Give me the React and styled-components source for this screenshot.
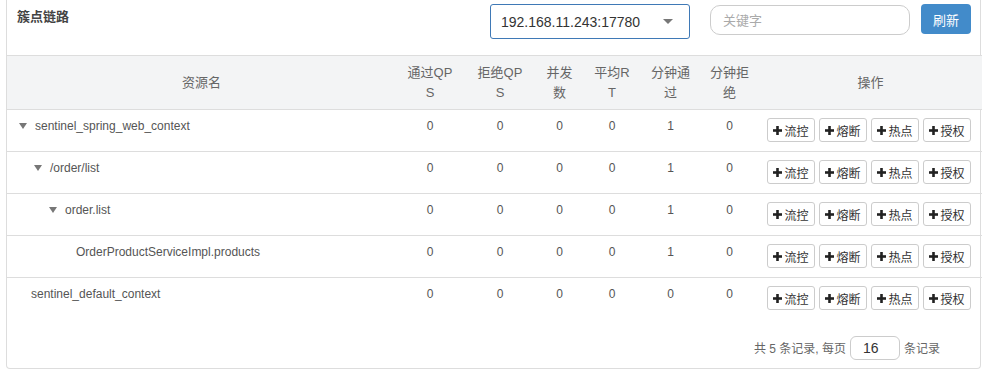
import styled, { createGlobalStyle } from "styled-components";

const GlobalStyle = createGlobalStyle`
  body {
    margin: 0;
    background: #fff;
    font-family: "Liberation Sans", Arial, "Noto Sans CJK SC", sans-serif;
    font-size: 13px;
    color: #555;
  }
`;

const Page = styled.div`
  padding: 0 6px 1px;
`;

const Panel = styled.section`
  border: 1px solid #ddd;
  border-top: 0;
  border-radius: 0 0 4px 4px;
  background: #fff;
`;

const Toolbar = styled.div`
  display: flex;
  align-items: flex-start;
  height: 55px;
  box-sizing: border-box;
  padding: 4px 9px 0 10px;
`;

const Title = styled.h3`
  flex: 1;
  margin: 4px 0 0;
  font-size: 13px;
  line-height: 18px;
  font-weight: bold;
  color: #444;
`;

const Select = styled.div`
  display: flex;
  align-items: center;
  justify-content: space-between;
  width: 200px;
  height: 35px;
  box-sizing: border-box;
  margin-right: 20px;
  padding: 0 16px 0 10px;
  border: 1px solid #3f79b6;
  border-radius: 3px;
  font-size: 14px;
  color: #333;
`;

const Caret = styled.span`
  width: 0;
  height: 0;
  border-left: 5px solid transparent;
  border-right: 5px solid transparent;
  border-top: 5px solid #777;
`;

const Search = styled.input`
  width: 200px;
  height: 30px;
  box-sizing: border-box;
  margin: 1px 11px 0 0;
  padding: 0 12px;
  border: 1px solid #ccc;
  border-radius: 10px;
  font-family: inherit;
  font-size: 13px;
  outline: none;

  &::placeholder {
    color: #aaa;
  }
`;

const PrimaryButton = styled.button`
  width: 50px;
  height: 30px;
  border: 0;
  border-radius: 4px;
  background: #428bca;
  color: #fff;
  font-family: inherit;
  font-size: 13px;
`;

const Table = styled.table`
  width: 100%;
  table-layout: fixed;
  border-collapse: collapse;
`;

const HeadCell = styled.th`
  width: ${(props) => props.$w}px;
  height: 54px;
  box-sizing: border-box;
  padding: 0 10px;
  background: #f3f4f5;
  border-top: 1px solid #ddd;
  border-bottom: 1px solid #ddd;
  font-weight: normal;
  color: #666;
  line-height: 20px;
  text-align: center;
  vertical-align: middle;
  word-break: break-all;
`;

const Row = styled.tr`
  & + & td {
    border-top: 1px solid #ddd;
  }
`;

const Cell = styled.td`
  height: 42px;
  box-sizing: border-box;
  padding: 7px 8px 0;
  font-size: 12px;
  line-height: 18px;
  vertical-align: top;
  text-align: ${(props) => (props.$center ? "center" : "left")};
  color: #555;
`;

const NameCell = styled(Cell)`
  padding-left: ${(props) => props.$indent}px;
  white-space: nowrap;
`;

const Toggle = styled.svg`
  display: inline-block;
  width: 8px;
  height: 6px;
  margin-right: 8px;
  vertical-align: 1px;
`;

const OpsCell = styled(Cell)`
  padding-top: 8px;
`;

const Ops = styled.div`
  display: flex;
  gap: 4px;
`;

const OpButton = styled.button`
  display: flex;
  align-items: center;
  justify-content: center;
  gap: 2px;
  width: 48px;
  height: 24px;
  padding: 0;
  border: 1px solid #ccc;
  border-radius: 3px;
  background: #fff;
  color: #333;
  font-family: inherit;
  font-size: 12px;
`;

const Pager = styled.div`
  display: flex;
  align-items: center;
  justify-content: flex-end;
  gap: 4px;
  padding: 16px 40px 8px 0;
  font-size: 12px;
  color: #666;
`;

const PageSize = styled.input`
  width: 50px;
  height: 24px;
  box-sizing: border-box;
  padding: 0 0 0 12px;
  border: 1px solid #ccc;
  border-radius: 6px;
  font-family: inherit;
  font-size: 14px;
  color: #333;
`;

const columns = [
  ["资源名", 389],
  ["通过QPS", 68],
  ["拒绝QPS", 72],
  ["并发数", 47],
  ["平均RT", 58],
  ["分钟通过", 59],
  ["分钟拒绝", 59],
  ["操作", 223],
];

const rows = [
  { name: "sentinel_spring_web_context", level: 0, open: true, minPass: 1 },
  { name: "/order/list", level: 1, open: true, minPass: 1 },
  { name: "order.list", level: 2, open: true, minPass: 1 },
  { name: "OrderProductServiceImpl.products", level: 3, minPass: 1 },
  { name: "sentinel_default_context", level: 0, minPass: 0 },
];

const actions = ["流控", "熔断", "热点", "授权"];

function Plus() {
  return (
    <svg width="9" height="9" viewBox="0 0 9 9">
      <rect x="3.2" y="0" width="2.6" height="9" fill="#222" />
      <rect x="0" y="3.2" width="9" height="2.6" fill="#222" />
    </svg>
  );
}

function App() {
  return (
    <Page>
      <GlobalStyle />
      <Panel>
        <Toolbar>
          <Title>簇点链路</Title>
          <Select>
            192.168.11.243:17780
            <Caret />
          </Select>
          <Search placeholder="关键字" />
          <PrimaryButton>刷新</PrimaryButton>
        </Toolbar>
        <Table>
          <thead>
            <tr>
              {columns.map(([label, w]) => (
                <HeadCell key={label} $w={w}>
                  {label}
                </HeadCell>
              ))}
            </tr>
          </thead>
          <tbody>
            {rows.map((r) => (
              <Row key={r.name}>
                <NameCell $indent={(r.open ? 12 : 24) + r.level * 15}>
                  {r.open && (
                    <Toggle viewBox="0 0 8 6">
                      <path d="M0 0H8L4 6Z" fill="#777" />
                    </Toggle>
                  )}
                  {r.name}
                </NameCell>
                <Cell $center>0</Cell>
                <Cell $center>0</Cell>
                <Cell $center>0</Cell>
                <Cell $center>0</Cell>
                <Cell $center>{r.minPass}</Cell>
                <Cell $center>0</Cell>
                <OpsCell>
                  <Ops>
                    {actions.map((a) => (
                      <OpButton key={a}>
                        <Plus />
                        {a}
                      </OpButton>
                    ))}
                  </Ops>
                </OpsCell>
              </Row>
            ))}
          </tbody>
        </Table>
        <Pager>
          共 5 条记录, 每页
          <PageSize defaultValue="16" />
          条记录
        </Pager>
      </Panel>
    </Page>
  );
}

export default App;
